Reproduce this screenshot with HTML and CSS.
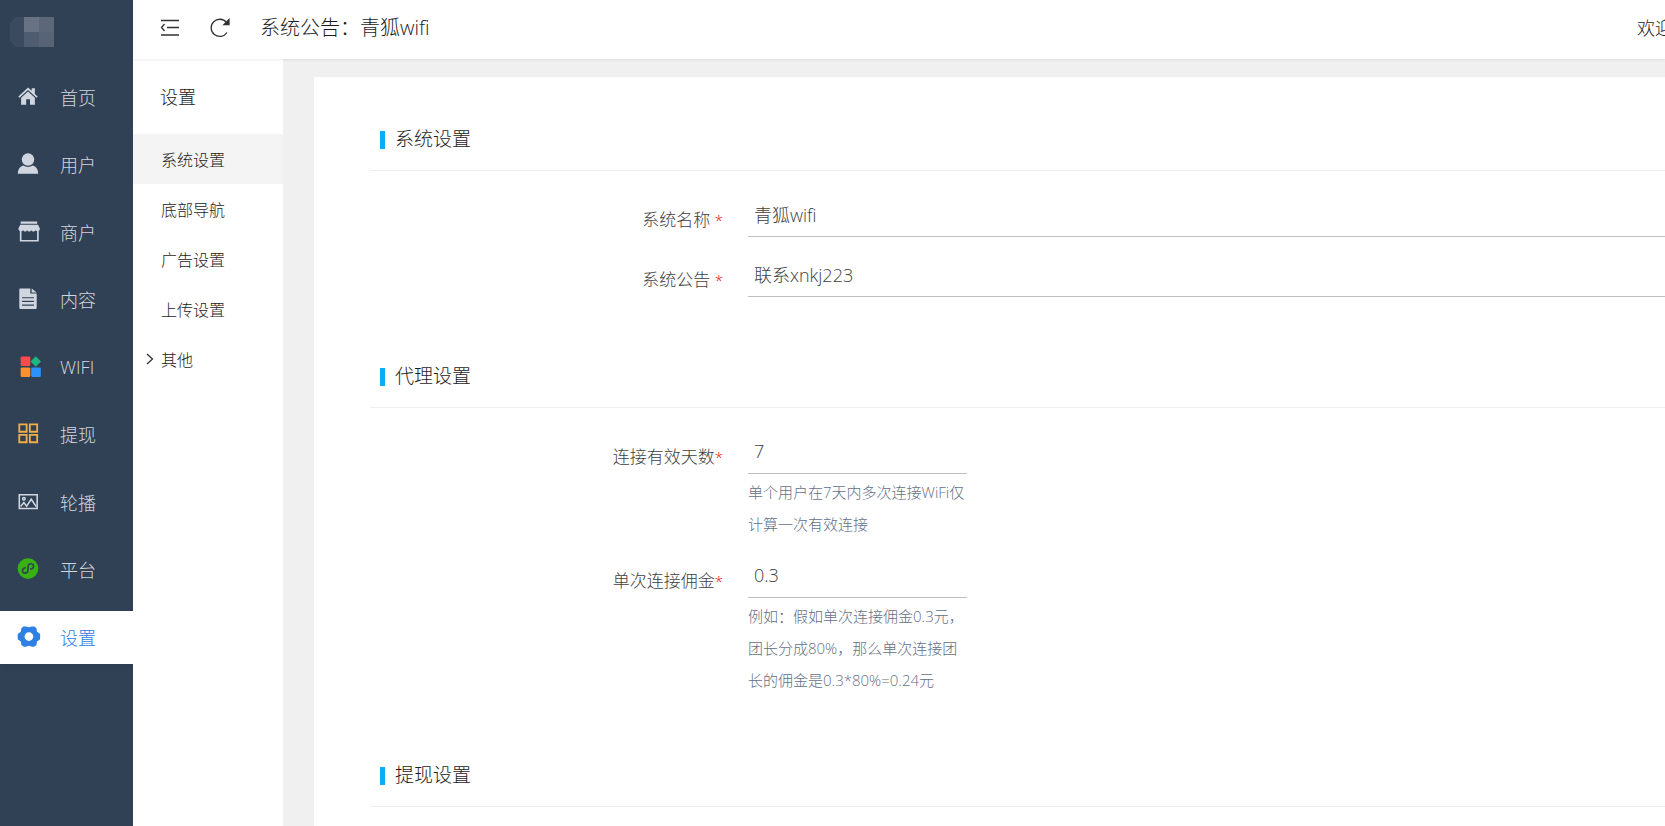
FILE: index.html
```html
<!DOCTYPE html>
<html lang="zh-CN">
<head>
<meta charset="utf-8">
<title>系统设置</title>
<link rel="stylesheet" href="styles.css">
</head>
<body>
<div class="app">
  <aside class="sidebar">
    <div class="logo">
      <svg width="46" height="32" viewBox="0 0 46 32" aria-hidden="true">
        <path d="M7 1h8v30H7l-6-6V7z" fill="#3c4a60"/>
        <path d="M15 1h15v15H15z" fill="#687283"/><path d="M30 1h15v15H30z" fill="#5c687a"/>
        <path d="M15 16h15v15H15z" fill="#4f5c70"/><path d="M30 16h15v15H30z" fill="#586476"/>
      </svg>
    </div>
    <nav class="nav">
      <a class="nav-item" href="#"><svg class="icon" viewBox="0 0 24 24"><path d="M1.500 11.500 12 1.500l4 3.800V2.500h3.500v6.100l3 2.900-1.200 1.300L12 4.300l-9.300 8.500z"/><path d="M4.500 12.800 12 6l7.500 6.800V20.500h-5.300v-6H10v6H4.500z"/></svg><span>首页</span></a>
      <a class="nav-item" href="#"><svg class="icon" viewBox="0 0 24 24"><circle cx="12" cy="7.200" r="6.800"/><path d="M.8 22.500c.3-4.800 2.200-7.600 6-8.800 3.200 2 7.200 2 10.400 0 3.800 1.200 5.700 4 6 8.800z"/></svg><span>用户</span></a>
      <a class="nav-item" href="#"><svg class="icon" viewBox="0 0 24 24"><path d="M4 .5h18v2.500H4zM3.500 4h19.500L25 8.500c0 3-3.500 3.500-4.800 1.500-1 2-3.600 2-4.500 0-.9 2-3.700 2-4.600 0-.9 2-3.500 2-4.500 0C5.300 12 1.500 11.500 1.500 8.500z"/><path d="M4 10v11.500h18.800V10" fill="none" stroke="currentColor" stroke-width="1.800"/></svg><span>商户</span></a>
      <a class="nav-item" href="#"><svg class="icon" viewBox="0 0 24 24"><path fill-rule="evenodd" d="M3.500.5h11v5.500H21.500V21.500a1.500 1.500 0 0 1-1.500 1.500h-16A1.500 1.500 0 0 1 2.500 21.500V1.500a1 1 0 0 1 1-1zM5.500 10v1.300h13V10zm0 4v1.300h13V14zm0 4v1.300h13V18z"/><path d="M16 .5 21.500 5H16z"/></svg><span>内容</span></a>
      <a class="nav-item" href="#"><svg class="icon" viewBox="0 0 24 24"><rect x="4" y=".5" width="10.500" height="10.500" rx="1.500" fill="#ff4a4d"/><rect x="4" y="12.500" width="10.500" height="10.500" rx="1.500" fill="#ff922e"/><rect x="15.500" y="12.500" width="10.500" height="10.500" rx="1.500" fill="#2a93fb"/><path d="m20.500.2 5.700 5.700-5.700 5.700-5.700-5.700z" fill="#1db881"/></svg><span>WIFI</span></a>
      <a class="nav-item" href="#"><svg class="icon orange" viewBox="0 0 24 24"><g fill="none" stroke="currentColor" stroke-width="2"><path d="M2.500 1.500h8V9.500h-8zM14 1.500h8V9.500h-8zM2.500 13h8v8h-8zM14 13h8v8h-8z"/></g></svg><span>提现</span></a>
      <a class="nav-item" href="#"><svg class="icon" viewBox="0 0 24 24"><g fill="none" stroke="currentColor" stroke-width="1.700"><path d="M2.500 4h19.500v15H2.500z"/><path d="m4 17 3.500-4.500 3 4L15.500 9l5.500 8"/><circle cx="7.500" cy="8.500" r="1.400"/></g></svg><span>轮播</span></a>
      <a class="nav-item" href="#"><svg class="icon" viewBox="0 0 24 24"><circle cx="12" cy="11.500" r="11.300" fill="#38b211"/><path d="M9 10.700c-4 .6-4 5.800-.4 5.800 2 0 3.400-1.300 3.400-3.200V9.500c0-1.900 1.400-3.200 3.400-3.200 3.600 0 3.600 5.200-.4 5.800" fill="none" stroke="#304156" stroke-width="1.700" stroke-linecap="round"/></svg><span>平台</span></a>
      <a class="nav-item active" href="#"><svg class="icon" viewBox="0 0 24 24"><path fill-rule="evenodd" stroke="currentColor" stroke-width="1.500" stroke-linejoin="round" d="M7.500 1.200h2.500q3 2 6 0h2.500l2 1.500.6 3.800 3.400 2.500v5l-3.400 2.500-.6 3.800-2 1.500H16q-3-2-6 0H7.500l-2-1.500-.6-3.800L1.500 14V9l3.400-2.500.6-3.800zM13 6a5.500 5.500 0 1 0 0 11A5.500 5.500 0 0 0 13 6z"/></svg><span>设置</span></a>
    </nav>
  </aside>

  <div class="page">
    <header class="topbar">
      <button class="tool" type="button" aria-label="收起菜单"><svg width="20" height="20" viewBox="0 0 20 20"><path d="M1 2.500h18M7 9.500h12M1 17h18M4.500 6 1.500 9.500l3 3.500"/></svg></button>
      <button class="tool" type="button" aria-label="刷新"><svg width="20" height="20" viewBox="0 0 20 20"><path d="M17 14.500A8.600 8.600 0 1 1 16.500 4.500"/><path d="M19 1.500v5h-5z" class="solid"/></svg></button>
      <p class="notice">系统公告：青狐wifi</p>
      <p class="welcome">欢迎</p>
    </header>

    <div class="body">
      <nav class="submenu">
        <h2 class="submenu-title">设置</h2>
        <a class="submenu-item current" href="#">系统设置</a>
        <a class="submenu-item" href="#">底部导航</a>
        <a class="submenu-item" href="#">广告设置</a>
        <a class="submenu-item" href="#">上传设置</a>
        <a class="submenu-item parent" href="#"><svg width="8" height="12" viewBox="0 0 8 12"><path d="m1 1 5.500 5L1 11"/></svg>其他</a>
      </nav>

      <main class="main">
        <form class="card">
          <section class="group">
            <h3 class="group-title">系统设置</h3>
            <div class="rows">
              <div class="row">
                <label class="label" for="name">系统名称 <span class="req">*</span></label>
                <div class="field"><input id="name" type="text" value="青狐wifi"></div>
              </div>
              <div class="row">
                <label class="label" for="announce">系统公告 <span class="req">*</span></label>
                <div class="field"><input id="announce" type="text" value="联系xnkj223"></div>
              </div>
            </div>
          </section>
          <section class="group">
            <h3 class="group-title">代理设置</h3>
            <div class="rows hinted">
              <div class="row">
                <label class="label" for="days">连接有效天数<span class="req">*</span></label>
                <div class="field short"><input id="days" type="text" value="7"><p class="hint">单个用户在7天内多次连接WiFi仅计算一次有效连接</p></div>
              </div>
              <div class="row">
                <label class="label" for="fee">单次连接佣金<span class="req">*</span></label>
                <div class="field short"><input id="fee" type="text" value="0.3"><p class="hint">例如：假如单次连接佣金0.3元，团长分成80%，那么单次连接团长的佣金是0.3*80%=0.24元</p></div>
              </div>
            </div>
          </section>
          <section class="group">
            <h3 class="group-title">提现设置</h3>
          </section>
        </form>
      </main>
    </div>
  </div>
</div>
</body>
</html>
```
FILE: styles.css
```css
* { box-sizing: border-box; }

body {
  margin: 0;
  overflow: hidden;
  font-family: "Open Sans", "Noto Sans CJK SC", sans-serif;
  font-weight: 300;
  color: #1c1c1c;
  background: #f0f0f0;
}

h2, h3, p { margin: 0; font-weight: inherit; }
a { color: inherit; text-decoration: none; }

.app { display: flex; height: 100vh; }

.sidebar { flex: 0 0 133px; background: #304156; }
.logo { height: 71px; padding: 16px 0 0 9px; }
.nav {
  display: flex;
  flex-direction: column;
  justify-content: space-between;
  height: 593px;
}
.nav-item {
  display: flex;
  align-items: center;
  gap: 21px;
  height: 53px;
  padding: 0 0 2px 17px;
  font-size: 18px;
  color: #d0d6df;
}
.nav-item.active {
  background: #fff;
  color: #2f80e4;
  box-shadow: 0 5px 4px rgba(0, 0, 0, 0.04);
}
.icon { width: 22px; height: 22px; fill: currentColor; overflow: visible; }
.orange { color: #f0ad4e; }

.page { flex: 1; min-width: 0; display: flex; flex-direction: column; }

.topbar {
  z-index: 1;
  display: flex;
  align-items: center;
  height: 59px;
  padding: 0 0 4px 27px;
  background: #fff;
  box-shadow: 0 1px 3px rgba(0, 0, 0, 0.08);
}
.tool {
  width: 20px;
  height: 20px;
  margin-right: 30px;
  padding: 0;
  border: 0;
  background: none;
}
.tool svg { display: block; fill: none; stroke: #333; stroke-width: 1.300; }
.tool .solid { fill: #333; }
.notice { font-size: 20px; line-height: 28px; }
.welcome {
  width: 28px;
  margin-left: auto;
  font-size: 18px;
  line-height: 28px;
  white-space: nowrap;
}

.body { flex: 1; min-height: 0; display: flex; }

.submenu { flex: 0 0 150px; background: #fff; }
.submenu-title {
  height: 75px;
  padding-left: 27px;
  font-size: 18px;
  line-height: 76px;
}
.submenu-item {
  display: flex;
  align-items: center;
  height: 50px;
  padding-left: 28px;
  font-size: 16px;
}
.current { background: #f4f4f4; }
.parent { gap: 7px; padding-left: 13px; }
.parent svg { fill: none; stroke: #333; stroke-width: 1.300; }

.main { flex: 1; min-width: 0; padding: 18px 0 0 31px; overflow: hidden; }
.card { min-height: 100%; padding: 48px 0 0 56px; background: #fff; }

.group { margin-bottom: 65px; }
.group-title {
  display: flex;
  align-items: center;
  gap: 10px;
  padding: 0 0 17px 10px;
  border-bottom: 1px solid #eee;
  font-size: 19px;
  line-height: 28px;
}
.group-title::before {
  content: "";
  width: 5px;
  height: 18px;
  margin-top: 2px;
  background: #0cadf7;
}

.rows { display: flex; flex-direction: column; gap: 18px; padding-top: 24px; }
.hinted { gap: 16px; }
.row { display: flex; gap: 25px; }
.label {
  flex: 0 0 353px;
  padding-top: 11px;
  font-size: 17px;
  line-height: 28px;
  text-align: right;
  color: #404040;
}
.req { font-size: 15px; color: #e00; }
.field { flex: 1; }
.field.short { flex: 0 0 219px; }
.field input {
  display: block;
  width: 100%;
  height: 42px;
  padding: 0 6px 3px;
  border: 0;
  border-bottom: 1px solid #bfbfbf;
  outline: 0;
  background: none;
  font: inherit;
  font-size: 18px;
  color: #404040;
}
.hint { padding-top: 2px; font-size: 15px; line-height: 32px; color: #647086; }
```
